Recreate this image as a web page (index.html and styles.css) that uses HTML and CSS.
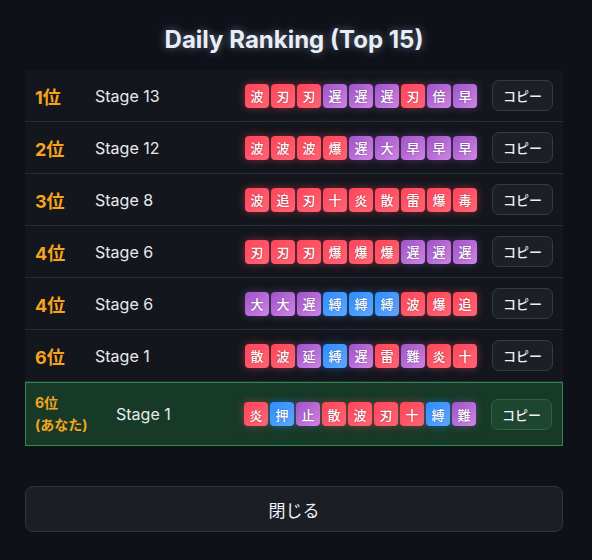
FILE: index.html
```html
<!DOCTYPE html>
<html lang="ja">
	<head>
		<meta charset="utf-8"/>
		<title>Daily Ranking</title>
		<link rel="stylesheet" href="styles.css">
	</head>
	<body>
		<div class="panel">
			<h2 class="title">Daily Ranking (Top 15)</h2>
			<div class="list">
				<div class="row">
					<div class="rank">1位</div>
					<div class="stage">Stage 13</div>
					<div class="tiles">
						<span class="t r">波</span><span class="t r">刃</span><span class="t r">刃</span><span class="t p">遅</span><span class="t p">遅</span><span class="t p">遅</span><span class="t r">刃</span><span class="t p">倍</span><span class="t p">早</span>
					</div>
					<button class="copy">コピー</button>
				</div>
				<div class="row">
					<div class="rank">2位</div>
					<div class="stage">Stage 12</div>
					<div class="tiles">
						<span class="t r">波</span><span class="t r">波</span><span class="t r">波</span><span class="t r">爆</span><span class="t p">遅</span><span class="t p">大</span><span class="t p">早</span><span class="t p">早</span><span class="t p">早</span>
					</div>
					<button class="copy">コピー</button>
				</div>
				<div class="row">
					<div class="rank">3位</div>
					<div class="stage">Stage 8</div>
					<div class="tiles">
						<span class="t r">波</span><span class="t r">追</span><span class="t r">刃</span><span class="t r">十</span><span class="t r">炎</span><span class="t r">散</span><span class="t r">雷</span><span class="t r">爆</span><span class="t r">毒</span>
					</div>
					<button class="copy">コピー</button>
				</div>
				<div class="row">
					<div class="rank">4位</div>
					<div class="stage">Stage 6</div>
					<div class="tiles">
						<span class="t r">刃</span><span class="t r">刃</span><span class="t r">刃</span><span class="t r">爆</span><span class="t r">爆</span><span class="t r">爆</span><span class="t p">遅</span><span class="t p">遅</span><span class="t p">遅</span>
					</div>
					<button class="copy">コピー</button>
				</div>
				<div class="row">
					<div class="rank">4位</div>
					<div class="stage">Stage 6</div>
					<div class="tiles">
						<span class="t p">大</span><span class="t p">大</span><span class="t p">遅</span><span class="t b">縛</span><span class="t b">縛</span><span class="t b">縛</span><span class="t r">波</span><span class="t r">爆</span><span class="t r">追</span>
					</div>
					<button class="copy">コピー</button>
				</div>
				<div class="row">
					<div class="rank">6位</div>
					<div class="stage">Stage 1</div>
					<div class="tiles">
						<span class="t r">散</span><span class="t r">波</span><span class="t p">延</span><span class="t b">縛</span><span class="t p">遅</span><span class="t r">雷</span><span class="t p">難</span><span class="t r">炎</span><span class="t r">十</span>
					</div>
					<button class="copy">コピー</button>
				</div>
				<div class="row me">
					<div class="rank">6位<br>(あなた)</div>
					<div class="stage">Stage 1</div>
					<div class="tiles">
						<span class="t r">炎</span><span class="t b">押</span><span class="t p">止</span><span class="t r">散</span><span class="t r">波</span><span class="t r">刃</span><span class="t r">十</span><span class="t b">縛</span><span class="t p">難</span>
					</div>
					<button class="copy">コピー</button>
				</div>
			</div>
			<button class="close">閉じる</button>
		</div>
	</body>
</html>
```

FILE: styles.css
```css
html, body {
	margin: 0;
	background-color: #0e1118;
}
body {
	font-family: Inter, "Noto Sans CJK JP", sans-serif;
	color: #e6e9ef;
}
.panel {
	padding: 0 29px 0 25px;
}
.title {
	margin: 0;
	padding: 26px 0 16px;
	text-align: center;
	font-size: 24px;
	font-weight: 700;
	line-height: 28px;
	color: #e9edf5;
	text-shadow: 0 0 8px rgba(200, 210, 255, 0.45);
}
.list {
	background-color: #13161d;
}
.row {
	display: flex;
	align-items: center;
	height: 52px;
	box-sizing: border-box;
	padding: 0 10px;
	border-bottom: 1px solid #2a2d34;
}
.rank {
	min-width: 60px;
	font-size: 18px;
	font-weight: 700;
	color: #f7a41c;
}
.stage {
	font-size: 16px;
	color: #e8eaee;
}
.tiles {
	display: flex;
	gap: 2px;
	margin-left: auto;
}
.t {
	width: 24px;
	height: 24px;
	border-radius: 4px;
	display: flex;
	align-items: center;
	justify-content: center;
	font-size: 13px;
	font-weight: 500;
	color: #fff;
	text-shadow: 0 0 2px rgba(0, 0, 0, 0.4);
}
.t.r {
	background: linear-gradient(135deg, #ff4458, #ff6676);
	box-shadow: 0 0 8px rgba(255, 70, 90, 0.45);
}
.t.p {
	background: linear-gradient(135deg, #a052c8, #cf86e6);
	box-shadow: 0 0 8px rgba(170, 90, 210, 0.4);
}
.t.b {
	background: linear-gradient(135deg, #2d8cff, #5ea9ff);
	box-shadow: 0 0 8px rgba(50, 140, 255, 0.45);
}
.copy {
	margin-left: 15px;
	width: 61px;
	height: 31px;
	border: 1px solid #363a42;
	border-radius: 7px;
	background-color: #1c1f26;
	color: #eef0f4;
	font-family: Inter, "Noto Sans CJK JP", sans-serif;
	font-size: 13px;
	font-weight: 500;
	padding: 0;
}
.row.me {
	height: 64px;
	border: 1px solid #2e8b4e;
	background-color: #163a27;
	padding: 0 10px 0 9px;
}
.row.me .rank {
	min-width: 81px;
	font-size: 14px;
	line-height: 22px;
}
.row.me .copy {
	background-color: #1e4530;
	border-color: #2f6244;
}
.close {
	display: block;
	width: 100%;
	margin-top: 40px;
	height: 46px;
	border: 1px solid #30343c;
	border-radius: 8px;
	background-color: #1b1e25;
	color: #eef0f4;
	font-family: Inter, "Noto Sans CJK JP", sans-serif;
	font-size: 17px;
}
```
